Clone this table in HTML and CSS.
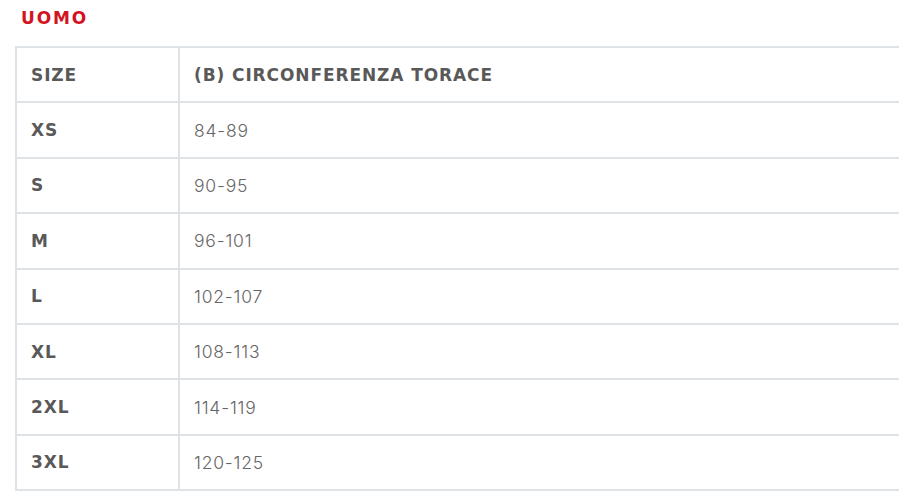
FILE: index.html
```html
<!DOCTYPE html>
<html lang="it">
<head>
<meta charset="utf-8">
<title>Tabella taglie</title>
<link rel="stylesheet" href="styles.css">
</head>
<body>
<div class="page">
  <h2 class="title">UOMO</h2>
  <table class="sizes">
    <thead>
      <tr><th class="c1">SIZE</th><th class="c2">(B) CIRCONFERENZA TORACE</th></tr>
    </thead>
    <tbody>
      <tr><th>XS</th><td>84-89</td></tr>
      <tr><th>S</th><td>90-95</td></tr>
      <tr><th>M</th><td>96-101</td></tr>
      <tr><th>L</th><td>102-107</td></tr>
      <tr><th>XL</th><td>108-113</td></tr>
      <tr><th>2XL</th><td>114-119</td></tr>
      <tr><th>3XL</th><td>120-125</td></tr>
    </tbody>
  </table>
</div>
</body>
</html>
```
FILE: styles.css
```css
html, body {
  margin: 0;
  padding: 0;
  background: #ffffff;
}
body {
  font-family: "DejaVu Sans", "Open Sans", sans-serif;
  color: #666666;
}
.page {
  padding: 0 0 0 15px;
  width: 884px;
}
.title {
  margin: 0;
  padding: 7px 0 0 6px;
  height: 46px;
  box-sizing: border-box;
  font-size: 17px;
  line-height: 22px;
  font-weight: 700;
  color: #d3141f;
  letter-spacing: 1.9px;
}
.sizes {
  width: 884px;
  border-collapse: collapse;
  border-top: 2px solid #dfe3e6;
  border-left: 2px solid #dfe3e6;
}
.sizes th, .sizes td {
  height: 53.4px;
  padding: 0 15px 0 14px;
  text-align: left;
  vertical-align: middle;
  border-bottom: 2px solid #dfe3e6;
  font-size: 17px;
}
.sizes th {
  font-weight: 700;
  color: #595959;
  letter-spacing: 0.9px;
}
.sizes tbody th {
  width: 132px;
  border-right: 2px solid #dfe3e6;
}
.sizes thead th.c1 {
  border-right: 2px solid #dfe3e6;
}
.sizes td {
  font-family: "Inter", "Open Sans", sans-serif;
  font-weight: 300;
  font-size: 17.5px;
  color: #666666;
  letter-spacing: 0.8px;
}
```
